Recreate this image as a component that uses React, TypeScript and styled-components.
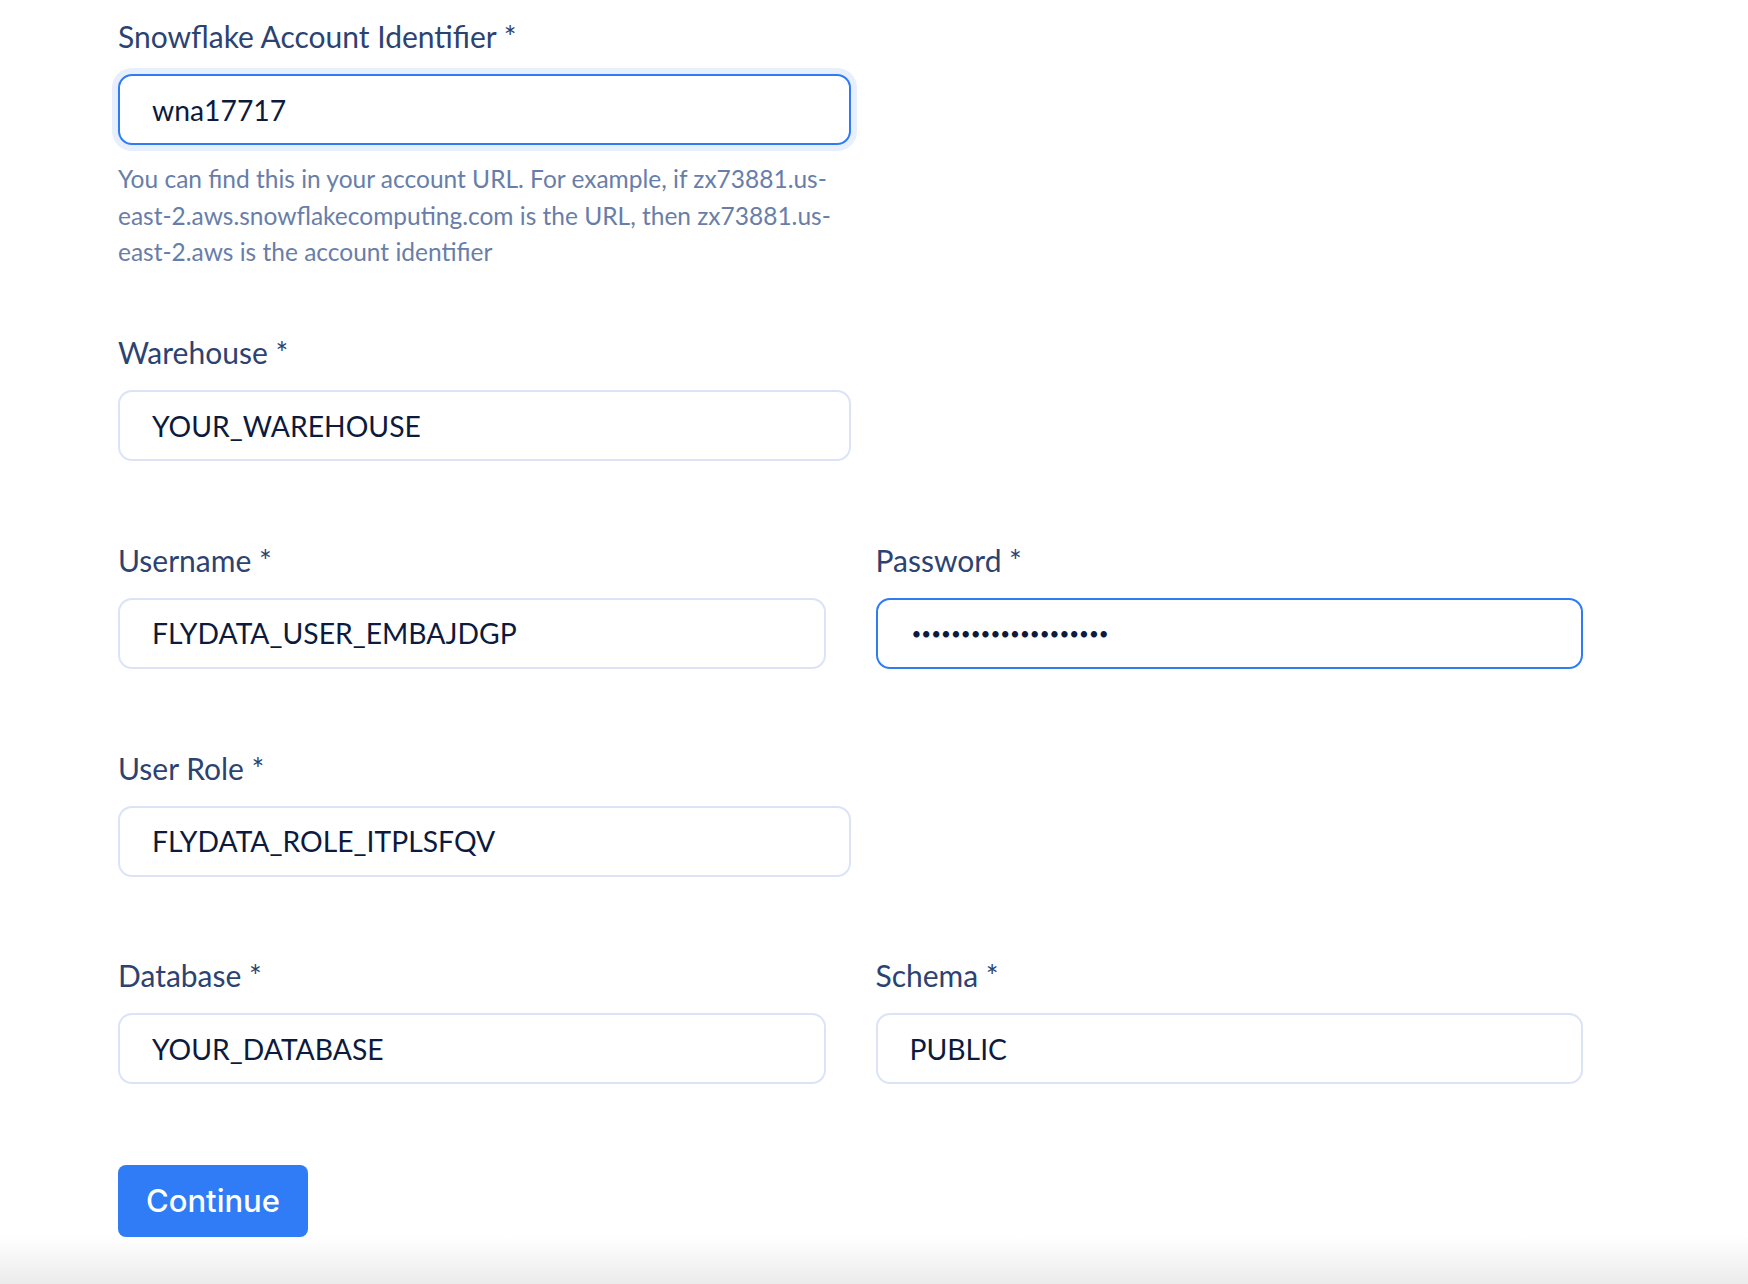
import React from 'react';
import styled, { createGlobalStyle } from 'styled-components';

const GlobalStyle = createGlobalStyle`
	html,
	body {
		margin: 0;
		padding: 0;
		min-height: 100%;
	}
	body {
		min-height: 100vh;
		background: linear-gradient(to bottom, #ffffff 0, #ffffff calc(100% - 48px), #ebebeb 100%);
		font-family: Lato, 'Open Sans', sans-serif;
	}
	* {
		box-sizing: border-box;
	}
`;

const Page = styled.div`
	padding: 18px 0 0 118px;
`;

const Form = styled.form`
	width: 1465px;
	display: flex;
	flex-direction: column;
	gap: 80.7px;
`;

const Row = styled.div<{ $split?: boolean }>`
	display: grid;
	grid-template-columns: ${(p) => (p.$split ? '1fr 1fr' : '1fr')};
	column-gap: 50px;
	width: ${(p) => (p.$split ? '100%' : '50%')};
`;

const Field = styled.div`
	display: flex;
	flex-direction: column;
`;

const Label = styled.label`
	font-size: 30px;
	line-height: 36px;
	color: #2c4372;
	margin-bottom: 20px;
`;

const Input = styled.input<{ $focused?: boolean; $ring?: boolean }>`
	height: 71px;
	width: 100%;
	padding: 0 32px;
	border: 2px solid ${(p) => (p.$focused ? '#2f7bf5' : '#dbe4f7')};
	border-radius: 14px;
	box-shadow: ${(p) => (p.$ring ? '0 0 0 6px #e7effd' : 'none')};
	font-family: Lato, 'Open Sans', sans-serif;
	font-size: 28.3px;
	color: #0c1a3d;
	background: #ffffff;
	outline: none;
`;

const PasswordInput = styled(Input)`
	font-size: 17px;
	padding-left: 34px;
`;

const Help = styled.p`
	margin: 16px 0 -17px;
	font-size: 24.5px;
	line-height: 36.5px;
	color: #687ea9;
	padding-right: 6px;
`;

const Button = styled.button`
	align-self: flex-start;
	width: 190px;
	height: 72px;
	padding: 0;
	border: none;
	border-radius: 8px;
	background: #307cf6;
	color: #ffffff;
	font-family: Inter, Lato, sans-serif;
	font-size: 31px;
	font-weight: 500;
	cursor: pointer;
`;

const App = () => {
	return (
		<Page>
			<GlobalStyle />
			<Form onSubmit={(e) => e.preventDefault()}>
				<Row>
					<Field>
						<Label>Snowflake Account Identifier *</Label>
						<Input value="wna17717" readOnly $focused $ring />
						<Help>
							You can find this in your account URL. For example, if zx73881.us-east-2.aws.snowflakecomputing.com is
							the URL, then zx73881.us-east-2.aws is the account identifier
						</Help>
					</Field>
				</Row>
				<Row>
					<Field>
						<Label>Warehouse *</Label>
						<Input value="YOUR_WAREHOUSE" readOnly />
					</Field>
				</Row>
				<Row $split>
					<Field>
						<Label>Username *</Label>
						<Input value="FLYDATA_USER_EMBAJDGP" readOnly />
					</Field>
					<Field>
						<Label>Password *</Label>
						<PasswordInput type="password" value="xxxxxxxxxxxxxxxxxxxx" readOnly $focused />
					</Field>
				</Row>
				<Row>
					<Field>
						<Label>User Role *</Label>
						<Input value="FLYDATA_ROLE_ITPLSFQV" readOnly />
					</Field>
				</Row>
				<Row $split>
					<Field>
						<Label>Database *</Label>
						<Input value="YOUR_DATABASE" readOnly />
					</Field>
					<Field>
						<Label>Schema *</Label>
						<Input value="PUBLIC" readOnly />
					</Field>
				</Row>
				<Button type="submit">Continue</Button>
			</Form>
		</Page>
	);
};

export default App;
